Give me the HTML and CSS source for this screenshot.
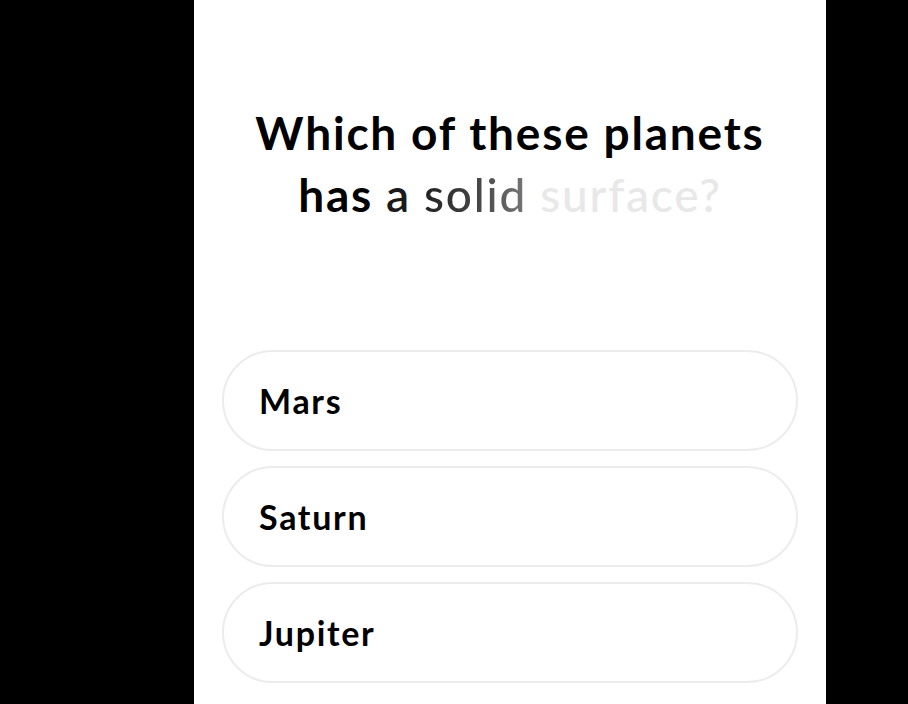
FILE: index.html
```html
<!DOCTYPE html>
<html>
<head>
<meta charset="utf-8">
<link rel="stylesheet" href="styles.css">
</head>
<body>
<main class="panel">
  <h1 class="question">
    <span class="line">Which of these planets</span>
    <span class="line"><span class="w0">has</span> <span class="w1">a</span> <span class="w2">solid</span> <span class="w3">surface?</span></span>
  </h1>
  <ul class="options">
    <li class="option">Mars</li>
    <li class="option">Saturn</li>
    <li class="option">Jupiter</li>
  </ul>
</main>
</body>
</html>
```
FILE: styles.css
```css
html, body {
  margin: 0;
  padding: 0;
  background: #000;
  height: 100%;
}
body {
  overflow: hidden;
  font-family: "Lato", "Inter", sans-serif;
}
.panel {
  width: 632px;
  height: 704px;
  margin-left: 194px;
  background: #fff;
  box-sizing: border-box;
  padding: 102px 28px 0 28px;
}
.question {
  margin: 0;
  text-align: center;
  font-size: 46px;
  font-weight: 700;
  line-height: 62px;
  color: #000;
  letter-spacing: 1.8px;
}
.line { display: block; }
.w0 { color: #000; }
.w1 { color: #1a1a1a; font-weight: 600; }
.w2 {
  font-weight: 500;
  background: linear-gradient(90deg, #222 0%, #444 50%, #777 100%);
  -webkit-background-clip: text;
  background-clip: text;
  color: transparent;
}
.w3 { color: #e8e8e8; font-weight: 500; }
.options {
  list-style: none;
  margin: 124px 0 0 0;
  padding: 0;
  display: flex;
  flex-direction: column;
  gap: 15px;
}
.option {
  height: 101px;
  box-sizing: border-box;
  border: 2px solid #ececec;
  border-radius: 51px;
  display: flex;
  align-items: center;
  padding-left: 35px;
  font-size: 34px;
  font-weight: 700;
  color: #000;
  letter-spacing: 1.7px;
}
```
